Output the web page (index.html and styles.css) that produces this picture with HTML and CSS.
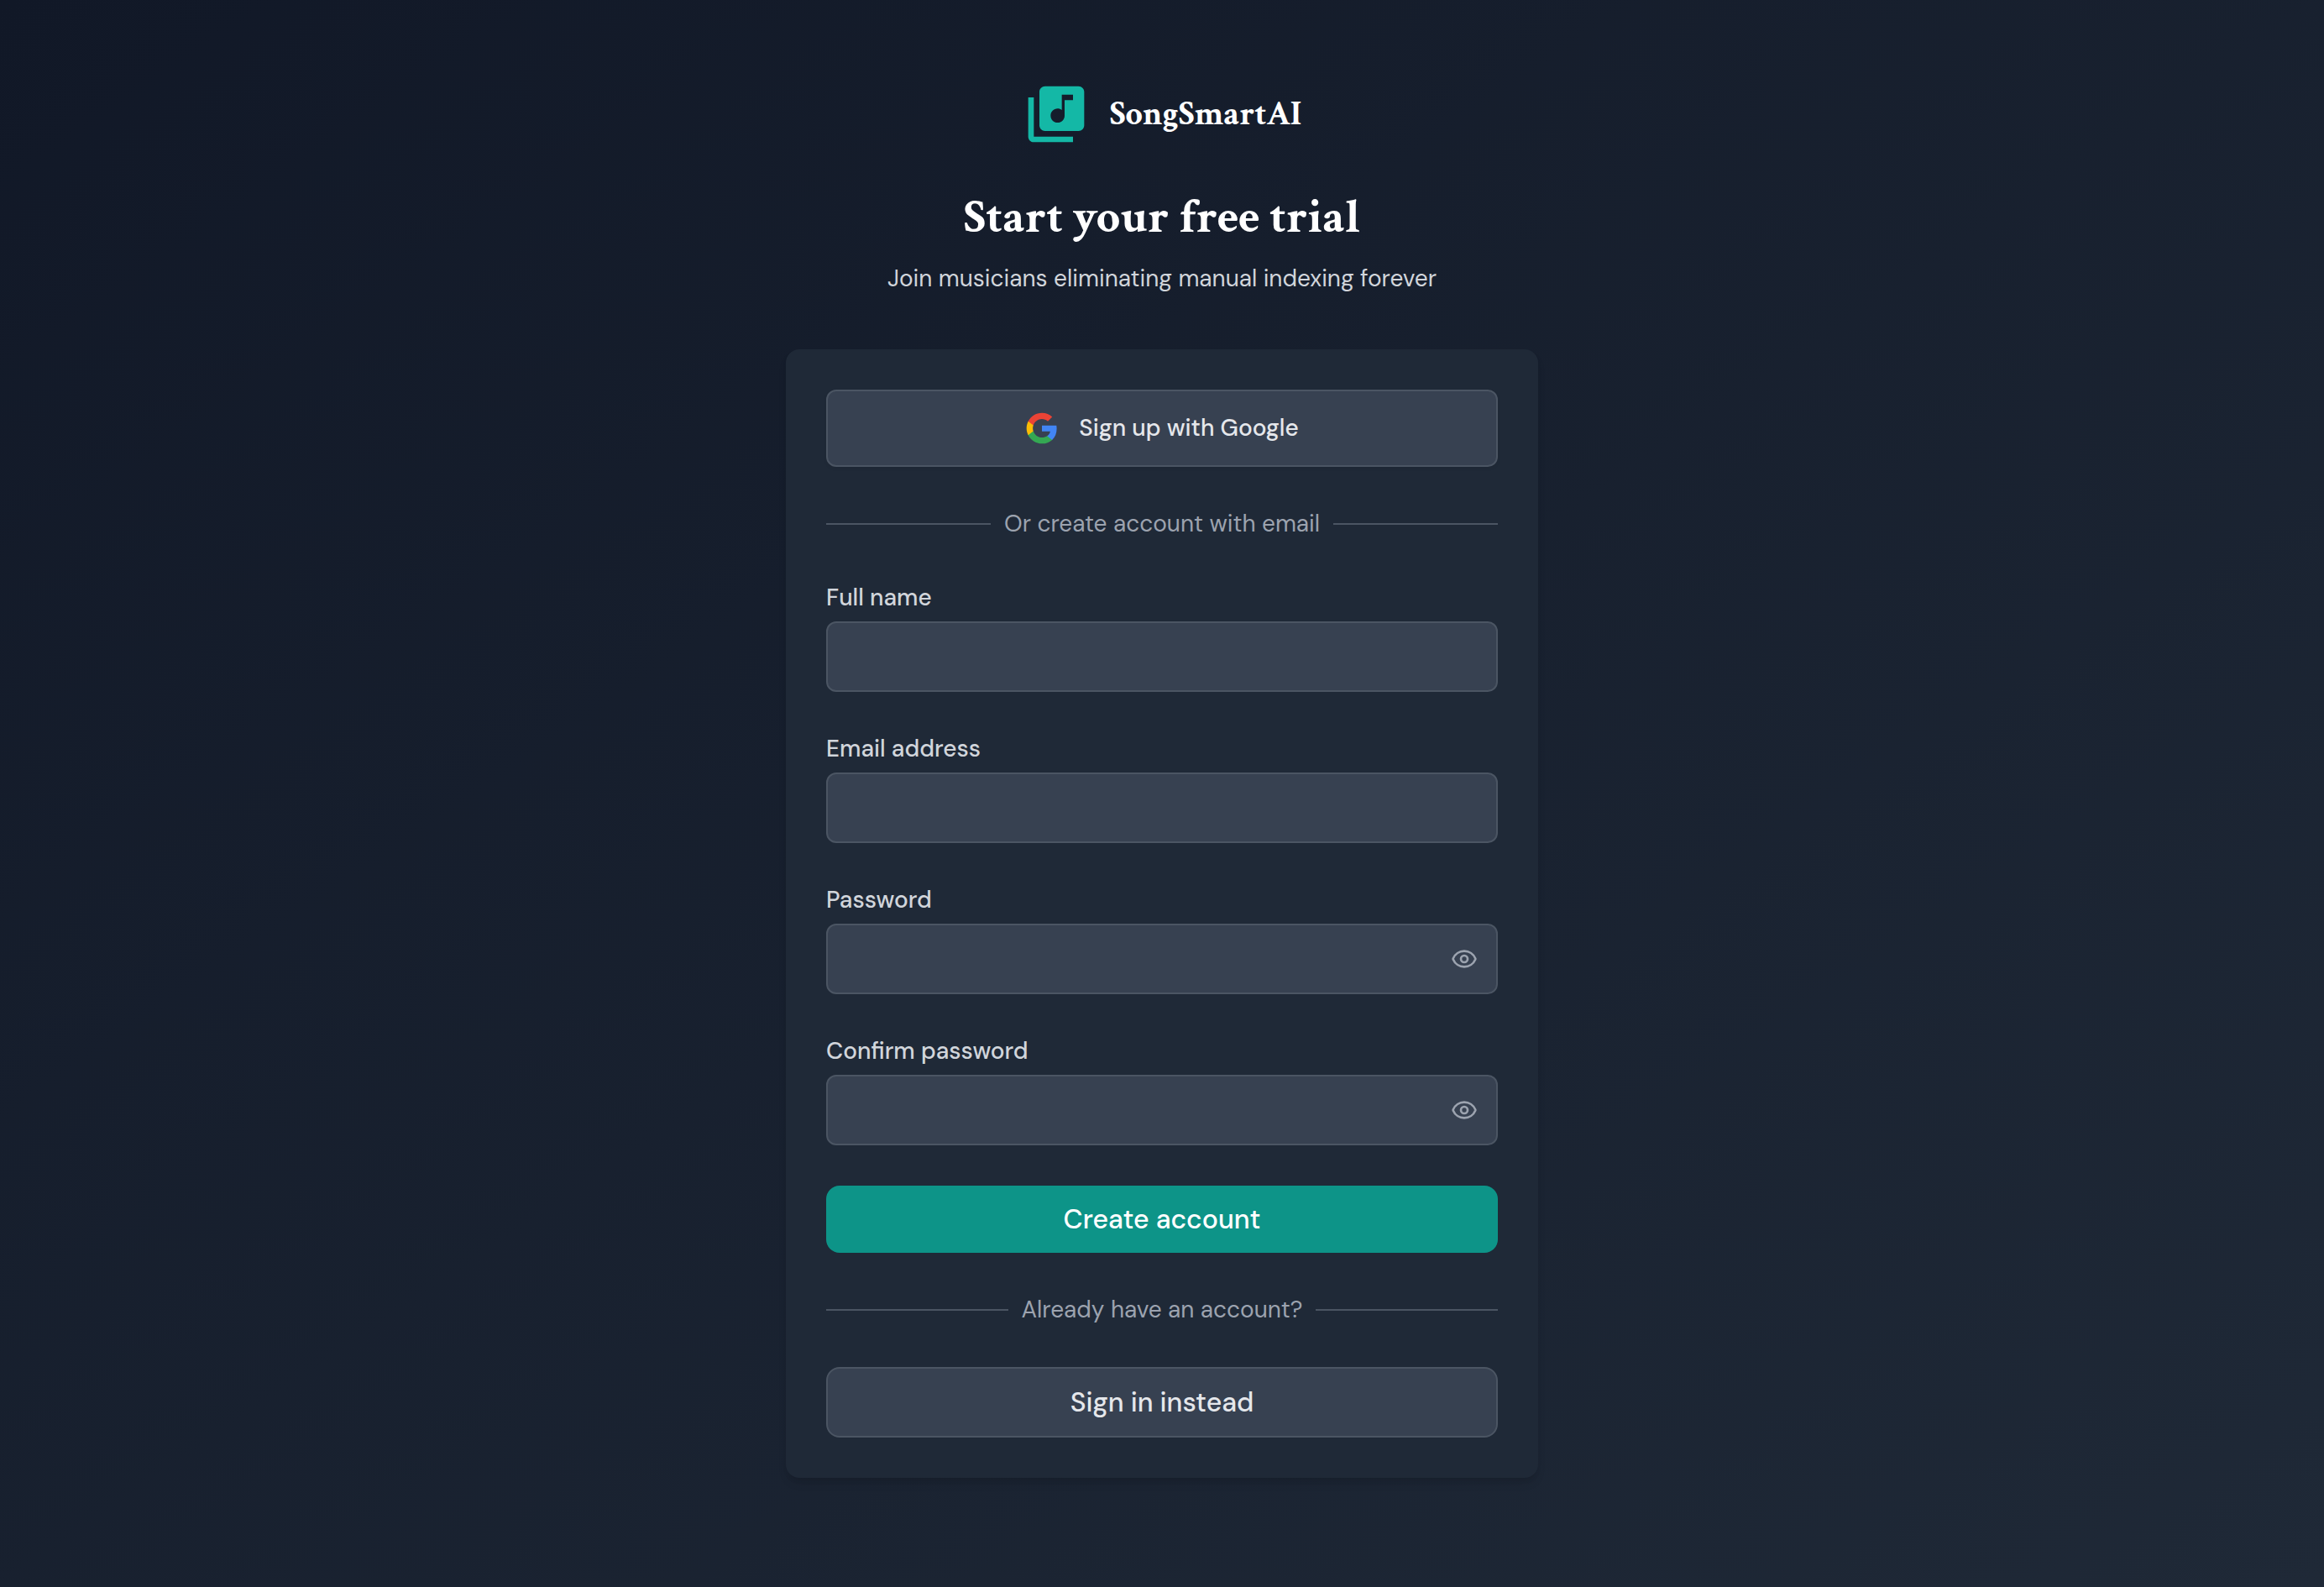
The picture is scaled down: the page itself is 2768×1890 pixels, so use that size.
FILE: index.html
```html
<!DOCTYPE html>
<html lang="en">

<head>
    <meta charset="UTF-8">
    <meta name="viewport" content="width=device-width, initial-scale=1.0">
    <title>SongSmartAI - Start your free trial</title>

    <link rel="stylesheet" href="styles.css">
</head>

<body>
    <main class="signup">
        <header class="header">
            <div class="brand">
                <svg class="brand-icon" viewBox="0 0 24 24" fill="currentColor" aria-hidden="true">
                    <path d="M20 2H8c-1.1 0-2 .9-2 2v12c0 1.1.9 2 2 2h12c1.1 0 2-.9 2-2V4c0-1.1-.9-2-2-2zm-2 5h-3v5.5c0 1.38-1.12 2.5-2.5 2.5S10 13.88 10 12.5s1.12-2.5 2.5-2.5c.57 0 1.08.19 1.5.51V5h4v2zM4 6H2v14c0 1.1.9 2 2 2h14v-2H4V6z" />
                </svg>
                <span class="brand-name">SongSmartAI</span>
            </div>
            <h1 class="title">Start your free trial</h1>
            <p class="subtitle">Join musicians eliminating manual indexing forever</p>
        </header>

        <form class="card">
            <button type="button" class="btn btn-google">
                <svg class="google-icon" viewBox="0 0 24 24" aria-hidden="true">
                    <path fill="#4285F4" d="M22.56 12.25c0-.78-.07-1.53-.2-2.25H12v4.26h5.92c-.26 1.37-1.04 2.53-2.21 3.31v2.77h3.57c2.08-1.92 3.28-4.74 3.28-8.09z" />
                    <path fill="#34A853" d="M12 23c2.97 0 5.46-.98 7.28-2.66l-3.57-2.77c-.98.66-2.23 1.06-3.71 1.06-2.86 0-5.29-1.93-6.16-4.53H2.18v2.84C3.99 20.53 7.7 23 12 23z" />
                    <path fill="#FBBC05" d="M5.84 14.09c-.22-.66-.35-1.36-.35-2.09s.13-1.43.35-2.09V7.07H2.18C1.43 8.55 1 10.22 1 12s.43 3.45 1.18 4.93l2.85-2.22.81-.62z" />
                    <path fill="#EA4335" d="M12 5.38c1.62 0 3.06.56 4.21 1.64l3.15-3.15C17.45 2.09 14.97 1 12 1 7.7 1 3.99 3.47 2.18 7.07l3.66 2.84c.87-2.6 3.3-4.53 6.16-4.53z" />
                </svg>
                Sign up with Google
            </button>

            <div class="divider">Or create account with email</div>

            <div class="field">
                <label for="name">Full name</label>
                <input type="text" id="name" name="name">
            </div>

            <div class="field">
                <label for="email">Email address</label>
                <input type="email" id="email" name="email">
            </div>

            <div class="field">
                <label for="password">Password</label>
                <div class="input-wrap">
                    <input type="password" id="password" name="password">
                    <button type="button" class="eye" aria-label="Show password">
                        <svg viewBox="0 0 24 24" aria-hidden="true">
                            <path d="M2.062 12.348a1 1 0 0 1 0-.696 10.75 10.75 0 0 1 19.876 0 1 1 0 0 1 0 .696 10.75 10.75 0 0 1-19.876 0" />
                            <circle cx="12" cy="12" r="3" />
                        </svg>
                    </button>
                </div>
            </div>

            <div class="field">
                <label for="confirm">Confirm password</label>
                <div class="input-wrap">
                    <input type="password" id="confirm" name="confirm">
                    <button type="button" class="eye" aria-label="Show password">
                        <svg viewBox="0 0 24 24" aria-hidden="true">
                            <path d="M2.062 12.348a1 1 0 0 1 0-.696 10.75 10.75 0 0 1 19.876 0 1 1 0 0 1 0 .696 10.75 10.75 0 0 1-19.876 0" />
                            <circle cx="12" cy="12" r="3" />
                        </svg>
                    </button>
                </div>
            </div>

            <button type="submit" class="btn btn-primary">Create account</button>

            <div class="divider">Already have an account?</div>

            <a href="#" class="btn btn-secondary">Sign in instead</a>
        </form>
    </main>
</body>

</html>
```
FILE: styles.css
```css
* {
    box-sizing: border-box;
}

body {
    margin: 0;
    min-height: 100vh;
    background: linear-gradient(to bottom right, #111827, #1f2937);
    color: #d1d5db;
    font-family: "DM Sans", "Open Sans", sans-serif;
    font-size: 28px;
    line-height: 40px;
}

.signup {
    max-width: 896px;
    margin: 0 auto;
    padding: 96px 0;
}

/* logo + heading */
.header {
    margin-bottom: 64px;
    text-align: center;
}

.brand {
    display: flex;
    align-items: center;
    justify-content: center;
    gap: 24px;
}

.brand-icon {
    width: 80px;
    height: 80px;
    color: #14b8a6;
}

.brand-name,
.title {
    color: #fff;
    font-family: "Crimson Text", "Liberation Serif", serif;
    font-weight: 700;
}

.brand-name {
    font-size: 40px;
}

.title {
    margin: 48px 0 16px;
    font-size: 56px;
    line-height: 72px;
}

.subtitle {
    margin: 0;
}

/* form card */
.card {
    display: flex;
    flex-direction: column;
    gap: 48px;
    padding: 48px;
    background-color: #1f2937;
    border-radius: 16px;
    box-shadow: 0 8px 12px -2px rgba(0, 0, 0, 0.1), 0 4px 8px -4px rgba(0, 0, 0, 0.1);
}

.btn {
    display: flex;
    align-items: center;
    justify-content: center;
    border: 2px solid #4b5563;
    border-radius: 16px;
    background-color: #374151;
    color: #e5e7eb;
    font-family: inherit;
    font-size: 32px;
    font-weight: 500;
    line-height: 40px;
    text-decoration: none;
    cursor: pointer;
}

.btn-google {
    gap: 24px;
    padding: 24px;
    border-radius: 12px;
    font-size: 28px;
    box-shadow: 0 2px 4px rgba(0, 0, 0, 0.05);
}

.google-icon {
    width: 40px;
    height: 40px;
}

.btn-primary {
    padding: 20px;
    border: none;
    background-color: #0d9488;
    color: #fff;
}

.btn-secondary {
    padding: 20px;
}

/* text with a line on both sides */
.divider {
    display: flex;
    align-items: center;
    gap: 16px;
    color: #9ca3af;
}

.divider::before,
.divider::after {
    content: "";
    flex: 1;
    height: 2px;
    background-color: #4b5563;
}

.field {
    display: flex;
    flex-direction: column;
    gap: 8px;
}

.field label {
    font-weight: 500;
}

.field input {
    width: 100%;
    height: 84px;
    padding: 0 24px;
    border: 2px solid #4b5563;
    border-radius: 12px;
    background-color: #374151;
    color: #fff;
    font: inherit;
}

.input-wrap {
    position: relative;
}

.input-wrap input {
    display: block;
    padding-right: 80px;
}

/* show / hide password */
.eye {
    position: absolute;
    top: 0;
    right: 0;
    bottom: 0;
    display: flex;
    align-items: center;
    padding: 0 24px;
    border: none;
    background: none;
    color: #9ca3af;
    cursor: pointer;
}

.eye svg {
    width: 32px;
    height: 32px;
    fill: none;
    stroke: currentColor;
    stroke-width: 2;
    stroke-linecap: round;
    stroke-linejoin: round;
}
```
